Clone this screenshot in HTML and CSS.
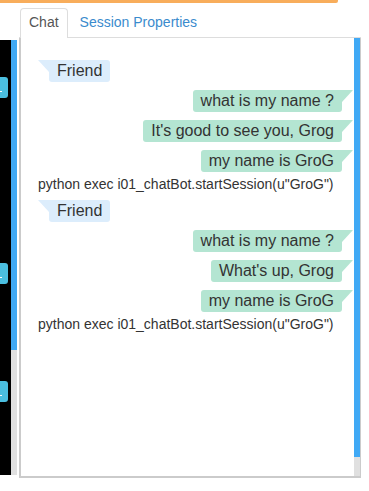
FILE: index.html
```html
<!DOCTYPE html>
<html>
<head>
<meta charset="utf-8">
<link rel="stylesheet" href="styles.css">
</head>
<body>
<div class="topbar"></div>
<div class="layout">
  <aside class="side">
    <div class="side-content">
      <div class="side-btn b1"><span class="dash"></span></div>
      <div class="side-btn b2"><span class="dash"></span></div>
      <div class="side-btn b3"><span class="dash"></span></div>
    </div>
    <div class="vscroll"><div class="thumb side-thumb"></div></div>
  </aside>
  <main class="main">
    <ul class="tabs">
      <li class="tab active">Chat</li>
      <li class="tab link">Session Properties</li>
    </ul>
    <div class="panel">
      <div class="chat">
        <div class="msg in first">Friend</div>
        <div class="msg out">what is my name ?</div>
        <div class="msg out">It's good to see you, Grog</div>
        <div class="msg out">my name is GroG</div>
        <div class="cmd">python exec i01_chatBot.startSession(u"GroG")</div>
        <div class="msg in after-cmd">Friend</div>
        <div class="msg out">what is my name ?</div>
        <div class="msg out">What's up, Grog</div>
        <div class="msg out">my name is GroG</div>
        <div class="cmd">python exec i01_chatBot.startSession(u"GroG")</div>
      </div>
      <div class="vscroll"><div class="thumb main-thumb"></div></div>
    </div>
  </main>
</div>
</body>
</html>
```
FILE: styles.css
```css
* { box-sizing: border-box; }
html, body { margin: 0; padding: 0; background: #fff; }
body {
  font-family: "Liberation Sans", Arial, sans-serif;
  color: #333;
  width: 369px;
  height: 491px;
  overflow: hidden;
}
.topbar {
  width: 338px;
  height: 3px;
  background: #f8ad5b;
  border-bottom-right-radius: 2px;
}
.layout {
  display: flex;
  align-items: flex-start;
}
.side {
  margin-top: 37px;
  width: 17px;
  height: 435px;
  display: flex;
}
.side-content {
  width: 11px;
  height: 100%;
  background: #000;
  display: flex;
  flex-direction: column;
}
.side-btn {
  width: 8px;
  height: 21px;
  background: #4bbfe0;
  border-radius: 0 3px 3px 0;
  position: relative;
}
.dash {
  position: absolute;
  left: 0;
  top: 14px;
  width: 2px;
  height: 1px;
  background: #fff;
}
.b1 { margin-top: 37px; }
.b2 { margin-top: 165px; }
.b3 { margin-top: 97px; }
.vscroll {
  width: 6px;
  height: 100%;
  background: #e0e0e0;
  display: flex;
  flex-direction: column;
}
.thumb { background: #40a9f5; width: 6px; }
.side-thumb { height: 310px; }
.main-thumb { height: 419px; }
.main {
  margin-left: 2px;
  width: 342px;
}
.tabs {
  list-style: none;
  margin: 5px 0 0 0;
  padding: 0 0 0 1px;
  display: flex;
  border-bottom: 1px solid #ddd;
  font-size: 14px;
  line-height: 20px;
}
.tab {
  padding: 3px 8px 6px;
  margin-bottom: -1px;
  border: 1px solid transparent;
  border-bottom: 0;
  border-radius: 4px 4px 0 0;
}
.tab.active {
  color: #555;
  background: #fff;
  border-color: #ddd;
}
.tab.link {
  color: #3a8bcd;
  margin-left: 3px;
}
.panel {
  display: flex;
  height: 440px;
  border-left: 2px solid #cbcbcb;
  border-right: 1px solid #cbcbcb;
  border-bottom: 2px solid #cbcbcb;
}
.chat {
  flex: 1;
  display: flex;
  flex-direction: column;
  padding: 22px 1px 0 17px;
}
.msg {
  position: relative;
  font-size: 16px;
  line-height: 22px;
  padding: 0 8px;
  margin-top: 8px;
}
.msg.first { margin-top: 0; }
.msg.after-cmd { margin-top: 6px; }
.msg.in {
  align-self: flex-start;
  background: #dcedfc;
  margin-left: 11px;
  border-radius: 0 3px 3px 3px;
}
.msg.in::before {
  content: "";
  position: absolute;
  left: -11px;
  top: 0;
  width: 0;
  height: 0;
  border-top: 12px solid #dcedfc;
  border-left: 11px solid transparent;
}
.msg.out {
  align-self: flex-end;
  background: #b4e5d2;
  margin-right: 11px;
  border-radius: 3px 0 3px 3px;
}
.msg.out::after {
  content: "";
  position: absolute;
  right: -11px;
  top: 0;
  width: 0;
  height: 0;
  border-top: 12px solid #b4e5d2;
  border-right: 11px solid transparent;
}
.cmd {
  font-size: 14px;
  line-height: 20px;
  margin-top: 2px;
  white-space: nowrap;
}
```
